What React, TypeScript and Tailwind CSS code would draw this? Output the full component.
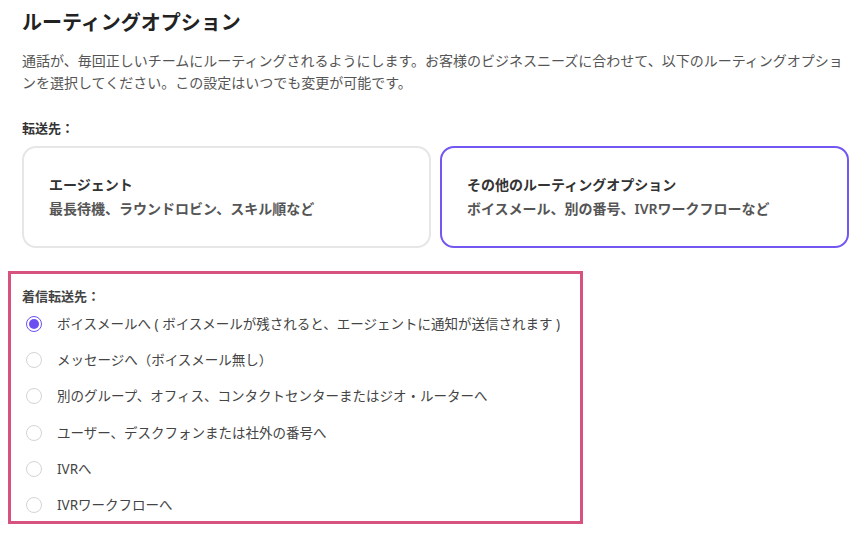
const OPTIONS = [
  'ボイスメールへ ( ボイスメールが残されると、エージェントに通知が送信されます )',
  'メッセージへ（ボイスメール無し）',
  '別のグループ、オフィス、コンタクトセンターまたはジオ・ルーターへ',
  'ユーザー、デスクフォンまたは社外の番号へ',
  'IVRへ',
  'IVRワークフローへ',
];

function Radio({ checked }: { checked: boolean }) {
  if (checked) {
    return (
      <span className="flex h-[16px] w-[16px] shrink-0 items-center justify-center rounded-full border-[1.5px] border-[#6b4ff0]">
        <span className="h-[10px] w-[10px] rounded-full bg-[#6b4ff0]" />
      </span>
    );
  }
  return <span className="h-[16px] w-[16px] shrink-0 rounded-full border border-[#d4d4d4]" />;
}

export default function App() {
  return (
    <div
      className="h-[533px] w-[858px] overflow-hidden bg-white px-[8px] pt-[9px] text-[#333]"
      style={{ fontFamily: '"Noto Sans", "Noto Sans CJK JP", sans-serif' }}
    >
      <div className="pl-[14px] pr-[1px]">
        <h1 className="text-[20px] font-bold leading-[28px] text-[#222]">ルーティングオプション</h1>
        <p className="mt-[13px] text-[14px] leading-[22px] text-[#555]">
          通話が、毎回正しいチームにルーティングされるようにします。お客様のビジネスニーズに合わせて、以下のルーティングオプションを選択してください。この設定はいつでも変更が可能です。
        </p>

        <p className="mt-[24px] text-[13px] font-bold leading-[20px] text-[#333]">転送先：</p>
        <div className="mt-[8px] grid grid-cols-2 gap-[9px]">
          <div className="flex h-[102px] flex-col justify-center rounded-[14px] border-2 border-[#e6e6e6] px-[25px]">
            <p className="text-[14px] font-bold leading-[24px] text-[#333]">エージェント</p>
            <p className="text-[14px] font-semibold leading-[24px] text-[#555]">最長待機、ラウンドロビン、スキル順など</p>
          </div>
          <div className="flex h-[102px] flex-col justify-center rounded-[14px] border-2 border-[#7456f1] px-[25px]">
            <p className="text-[14px] font-bold leading-[24px] text-[#333]">その他のルーティングオプション</p>
            <p className="text-[14px] font-semibold leading-[24px] text-[#555]">ボイスメール、別の番号、IVRワークフローなど</p>
          </div>
        </div>
      </div>

      <section className="mt-[23px] w-[575px] border-[3px] border-[#d8527f] pb-[6px] pl-[11px] pt-[12px]">
        <p className="text-[13px] font-bold leading-[20px] text-[#444]">着信転送先：</p>
        <ul className="mt-[8px] flex flex-col gap-[16.2px]">
          {OPTIONS.map((opt, i) => (
            <li key={opt} className="flex h-[20px] items-center gap-[15px] pl-[4px]">
              <Radio checked={i === 0} />
              <span className="text-[13.5px] leading-[20px] text-[#444]">{opt}</span>
            </li>
          ))}
        </ul>
      </section>
    </div>
  );
}
